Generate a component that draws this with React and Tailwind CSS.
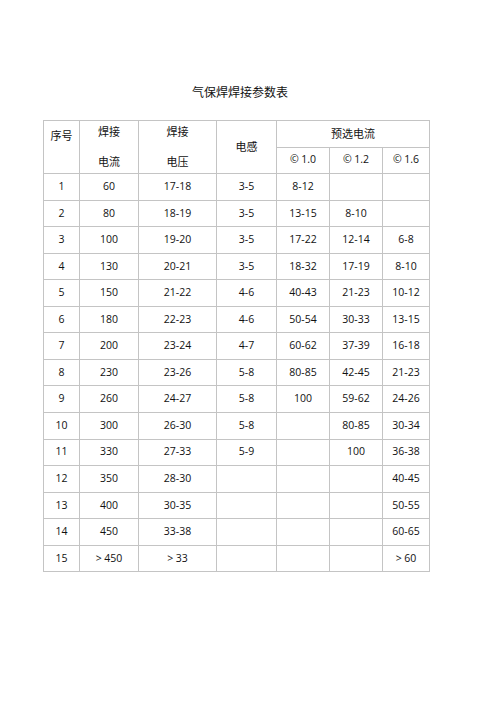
const rows = [
    ["1", "60", "17-18", "3-5", "8-12", "", ""],
    ["2", "80", "18-19", "3-5", "13-15", "8-10", ""],
    ["3", "100", "19-20", "3-5", "17-22", "12-14", "6-8"],
    ["4", "130", "20-21", "3-5", "18-32", "17-19", "8-10"],
    ["5", "150", "21-22", "4-6", "40-43", "21-23", "10-12"],
    ["6", "180", "22-23", "4-6", "50-54", "30-33", "13-15"],
    ["7", "200", "23-24", "4-7", "60-62", "37-39", "16-18"],
    ["8", "230", "23-26", "5-8", "80-85", "42-45", "21-23"],
    ["9", "260", "24-27", "5-8", "100", "59-62", "24-26"],
    ["10", "300", "26-30", "5-8", "", "80-85", "30-34"],
    ["11", "330", "27-33", "5-9", "", "100", "36-38"],
    ["12", "350", "28-30", "", "", "", "40-45"],
    ["13", "400", "30-35", "", "", "", "50-55"],
    ["14", "450", "33-38", "", "", "", "60-65"],
    ["15", "> 450", "> 33", "", "", "", "> 60"],
];

const cell = "border-r border-b border-[#c4c4c4]";

export default function App() {
    return (
        <div className="w-[500px] h-[708px] bg-white text-[#111] font-['Open_Sans','Noto_Sans_CJK_SC',sans-serif]">
            <div className="pt-[85px] pr-[20px] text-center text-[12px] leading-[16px]">气保焊焊接参数表</div>

            <div className="mt-[19px] ml-[43px] w-[387px] grid grid-cols-[36px_59px_78px_60px_53px_53px_47px] auto-rows-[26.55px] border-l border-t border-[#c4c4c4]">
                <div className={`${cell} row-span-2 text-center text-[11px] leading-[14px] pt-[8px]`}>序号</div>
                <div className={`${cell} row-span-2 flex flex-col items-center text-[11px] leading-[14px] pt-[4px]`}>
                    <span>焊接</span>
                    <span className="mt-[16px]">电流</span>
                </div>
                <div className={`${cell} row-span-2 flex flex-col items-center text-[11px] leading-[14px] pt-[4px]`}>
                    <span>焊接</span>
                    <span className="mt-[16px]">电压</span>
                </div>
                <div className={`${cell} row-span-2 flex items-center justify-center text-[11px]`}>电感</div>
                <div className={`${cell} col-span-3 flex items-center justify-center text-[11px]`}>预选电流</div>
                <div className={`${cell} flex items-center justify-center text-[10.5px]`}>© 1.0</div>
                <div className={`${cell} flex items-center justify-center text-[10.5px]`}>© 1.2</div>
                <div className={`${cell} flex items-center justify-center text-[10.5px]`}>© 1.6</div>

                {rows.map((r) =>
                    r.map((v, i) => (
                        <div
                            key={r[0] + "-" + i}
                            className={`${cell} flex items-center justify-center text-[10.5px] whitespace-pre`}
                        >
                            {v}
                        </div>
                    ))
                )}
            </div>
        </div>
    );
}
